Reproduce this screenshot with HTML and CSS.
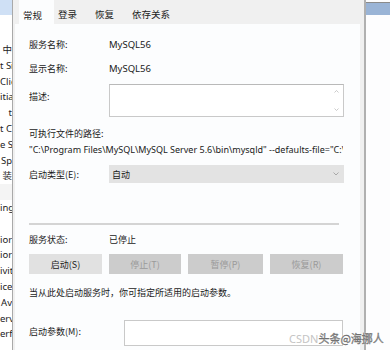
FILE: index.html
```html
<!DOCTYPE html>
<html>
<head>
	<title>MySQL56 的属性</title>
	<link rel="stylesheet" href="styles.css">
</head>
<body>
	<div class="screen">
		<!-- 左侧：服务列表（被对话框挡住） -->
		<ul class="bg-list">
			<li class="sel">&nbsp;</li>
			<li class="gap">&nbsp;</li>
			<li>中</li>
			<li>t Si</li>
			<li>Clie</li>
			<li>itia</li>
			<li>t</li>
			<li>t C</li>
			<li>e S</li>
			<li>Sp</li>
			<li>装</li>
			<li class="light">&nbsp;</li>
			<li>ing</li>
			<li>&nbsp;</li>
			<li>ior</li>
			<li>ior</li>
			<li>ivit</li>
			<li>ice</li>
			<li>Av</li>
			<li>ervi</li>
			<li>erf</li>
		</ul>

		<div class="dialog">
			<div class="tabs">
				<span class="tab active">常规</span>
				<span class="tab">登录</span>
				<span class="tab">恢复</span>
				<span class="tab">依存关系</span>
			</div>

			<div class="panel">
				<div class="row">
					<span class="label">服务名称:</span>
					<span class="value">MySQL56</span>
				</div>
				<div class="row">
					<span class="label">显示名称:</span>
					<span class="value">MySQL56</span>
				</div>
				<div class="row desc-row">
					<span class="label">描述:</span>
					<div class="textarea">
						<div class="scroll">
							<svg width="5" height="3" viewBox="0 0 5 3"><path d="M0.5 2.5 L2.5 0.5 L4.5 2.5" fill="none" stroke="#b5b5b5" stroke-width="0.7"/></svg>
							<svg width="5" height="3" viewBox="0 0 5 3"><path d="M0.5 0.5 L2.5 2.5 L4.5 0.5" fill="none" stroke="#b5b5b5" stroke-width="0.7"/></svg>
						</div>
					</div>
				</div>

				<p class="path-label">可执行文件的路径:</p>
				<p class="path">"C:\Program Files\MySQL\MySQL Server 5.6\bin\mysqld" --defaults-file="C:\ProgramData\MySQL\MySQL Server 5.6\my.ini" MySQL56</p>

				<div class="row type-row">
					<span class="label">启动类型(E):</span>
					<div class="select">
						<span>自动</span>
						<svg width="6" height="4" viewBox="0 0 6 4"><path d="M0.5 0.5 L3 3 L5.5 0.5" fill="none" stroke="#999" stroke-width="0.8"/></svg>
					</div>
				</div>

				<hr class="sep">

				<div class="row status-row">
					<span class="label">服务状态:</span>
					<span class="value">已停止</span>
				</div>

				<div class="buttons">
					<button class="btn">启动(S)</button>
					<button class="btn off">停止(T)</button>
					<button class="btn off">暂停(P)</button>
					<button class="btn off">恢复(R)</button>
				</div>

				<p class="hint">当从此处启动服务时，你可指定所适用的启动参数。</p>

				<div class="row param-row">
					<span class="label">启动参数(M):</span>
					<div class="input"></div>
				</div>
			</div>
		</div>

		<div class="bg-right">
			<div class="bar"></div>
		</div>
	</div>

	<div class="mark"><span class="csdn">CSDN</span><span class="tt">头条@海挪人</span></div>
</body>
</html>
```

FILE: styles.css
```css
html, body {
	margin: 0;
	padding: 0;
}

body {
	width: 390px;
	height: 350px;
	overflow: hidden;
	background: #fbfcfd;
	font-family: "Noto Sans CJK SC", "Noto Sans", sans-serif;
	font-size: 9px;
	color: #1a1a1a;
	position: relative;
}

.screen {
	display: flex;
	height: 350px;
}

/* 左侧列表 */
.bg-list {
	list-style: none;
	margin: 0;
	padding: 0;
	width: 12px;
	flex: none;
	overflow: hidden;
	border-right: 1px solid #a9a9a9;
	background: #fff;
	white-space: nowrap;
	font-family: "Noto Sans", "Noto Sans CJK SC", sans-serif;
	font-size: 9.5px;
	color: #222;
	direction: rtl;
	text-align: right;
}

.bg-list li {
	height: 15.8px;
	line-height: 15.8px;
	direction: ltr;
	unicode-bidi: bidi-override;
}

.bg-list li.sel {
	background: #cfe0f5;
	height: 15px;
}

.bg-list li.gap {
	height: 27px;
}

.bg-list li.light {
	background: #f4f4f4;
}

/* 对话框 */
.dialog {
	width: 351px;
	flex: none;
	background: #f0f0f0;
	display: flex;
	flex-direction: column;
	border-right: 2px solid #b0b0b0;
}

.tabs {
	height: 24px;
	display: flex;
	padding-left: 6px;
	align-items: stretch;
}

.tab {
	padding: 0 14px 0 4px;
	line-height: 28px;
	color: #222;
	font-size: 9.5px;
}

.tab.active {
	background: #fcfdfe;
	padding: 0 7px 0 4px;
	width: 24px;
	line-height: 30px;
}

.panel {
	flex: 1;
	background: #fcfdfe;
	margin: 0 4px 0 2px;
	padding: 0 0 0 14px;
	overflow: hidden;
}

.row {
	display: flex;
	align-items: center;
}

.label {
	width: 80px;
	flex: none;
}

.row:first-child {
	margin-top: 11px;
	height: 18px;
}

.row:nth-child(2) {
	margin-top: 6px;
	height: 18px;
}

.value {
	font-family: "Noto Sans", "Noto Sans CJK SC", sans-serif;
	font-size: 9.5px;
}

.desc-row {
	margin-top: 7px;
	align-items: flex-start;
}

.desc-row .label {
	margin-top: 6px;
}

.textarea {
	width: 233px;
	height: 31px;
	border: 1px solid #c9c9c9;
	border-top-color: #b9b9b9;
	background: #fff;
	display: flex;
	justify-content: flex-end;
}

.scroll {
	width: 10px;
	margin: 5px 2px 5px 0;
	display: flex;
	flex-direction: column;
	justify-content: space-between;
	align-items: center;
}

.path-label {
	margin: 10px 0 0;
	line-height: 14px;
}

.path {
	margin: 2px 0 0;
	white-space: nowrap;
	overflow: hidden;
	width: 314px;
	line-height: 14px;
	font-family: "Noto Sans", "Noto Sans CJK SC", sans-serif;
	font-size: 9px;
}

.type-row {
	margin-top: 8px;
}

.select {
	width: 227px;
	height: 18px;
	background: #e3e3e3;
	display: flex;
	align-items: center;
	justify-content: space-between;
	padding: 0 5px 0 3px;
}

.sep {
	border: 0;
	border-top: 2px solid #d4d4d4;
	margin: 40px 0 0;
	width: 310px;
	height: 0;
}

.status-row {
	margin-top: 6px;
	height: 16px;
}

.status-row .value {
	font-family: "Noto Sans CJK SC", sans-serif;
	font-size: 9px;
}

.buttons {
	display: grid;
	grid-template-columns: 73px 72px 75px 73px;
	column-gap: 7px;
	margin-top: 7px;
}

.btn {
	height: 20px;
	border: 0;
	padding: 0;
	background: #e1e1e1;
	font-family: "Noto Sans CJK SC", sans-serif;
	font-size: 9px;
	color: #222;
}

.btn.off {
	background: #cccccc;
	color: #9a9a9a;
}

.hint {
	margin: 11px 0 0;
	line-height: 16px;
}

.param-row {
	margin-top: 19px;
	align-items: flex-start;
}

.param-row .label {
	width: 95px;
	margin-top: 5px;
}

.input {
	width: 217px;
	height: 24px;
	border: 1px solid #c9c9c9;
	background: #fff;
}

/* 右侧 */
.bg-right {
	flex: 1;
	background: #fdfdfe;
	padding-top: 2px;
}

.bar {
	height: 12px;
	background: #9ab4d6;
	border-top: 1px solid #8a8a8a;
}

/* 水印 */
.mark {
	position: absolute;
	left: 289px;
	top: 331px;
	font-size: 11px;
	line-height: 14px;
	white-space: nowrap;
}

.mark .csdn {
	color: #c4c4c4;
	font-family: "Noto Sans", sans-serif;
}

.mark .tt {
	color: #8c8c8c;
	-webkit-text-stroke: 0.3px #666;
	text-shadow: 0 0 1px #fff, 0 0 2px #fff;
}
```
